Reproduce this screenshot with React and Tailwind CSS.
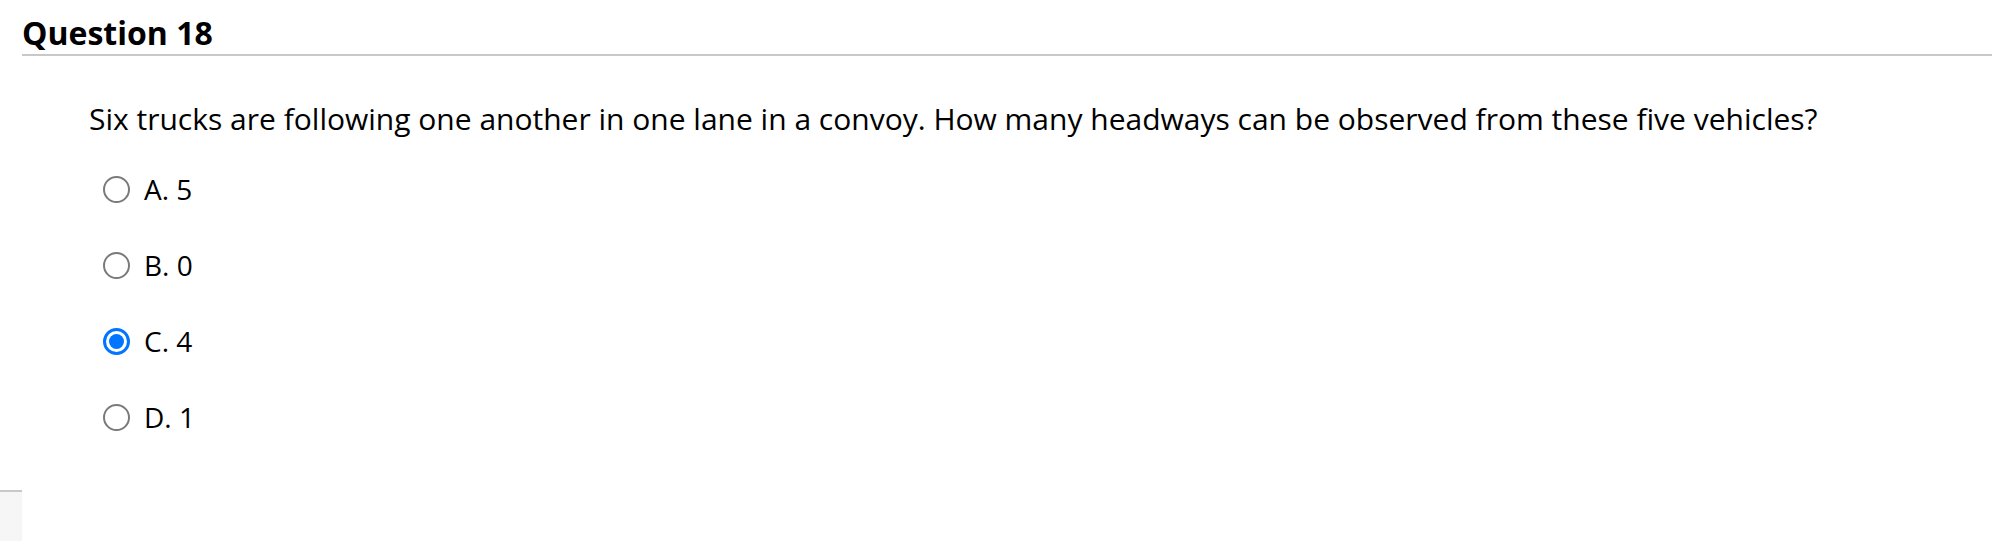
import { useState } from 'react'

const options = [
  { id: 'a', label: 'A. 5' },
  { id: 'b', label: 'B. 0' },
  { id: 'c', label: 'C. 4' },
  { id: 'd', label: 'D. 1' },
]

function Radio({ checked }) {
  if (checked) {
    return (
      <span className="flex h-[27px] w-[27px] shrink-0 items-center justify-center rounded-full border-[3px] border-[#0075ff] bg-white">
        <span className="h-[15px] w-[15px] rounded-full bg-[#0075ff]" />
      </span>
    )
  }
  return <span className="h-[27px] w-[27px] shrink-0 rounded-full border-[2.5px] border-[#7a7a7a] bg-white" />
}

export default function App() {
  const [selected, setSelected] = useState('c')

  return (
    <div className="min-h-[541px] bg-white font-['Open_Sans',sans-serif] text-black">
      <div className="ml-[22px] border-b-2 border-[#c8c8c8] pt-[12px]">
        <h2 className="text-[32px] font-bold leading-[42px]">Question 18</h2>
      </div>

      <div className="pl-[89px] pt-[42px]">
        <p className="text-[30px] leading-[41px]">
          Six trucks are following one another in one lane in a convoy. How many headways can be observed from these five vehicles?
        </p>
      </div>

      <div className="mt-[31px] flex flex-col gap-[38px] pl-[103px]">
        {options.map((opt) => (
          <label key={opt.id} className="flex h-[38px] cursor-pointer items-center gap-[14px]" onClick={() => setSelected(opt.id)}>
            <Radio checked={selected === opt.id} />
            <span className="text-[28px] leading-[38px]">{opt.label}</span>
          </label>
        ))}
      </div>

      <div className="mt-[54px] w-[22px] border-t-2 border-[#c8c8c8]">
        <div className="h-[50px] bg-[#f6f6f6]" />
      </div>
    </div>
  )
}
